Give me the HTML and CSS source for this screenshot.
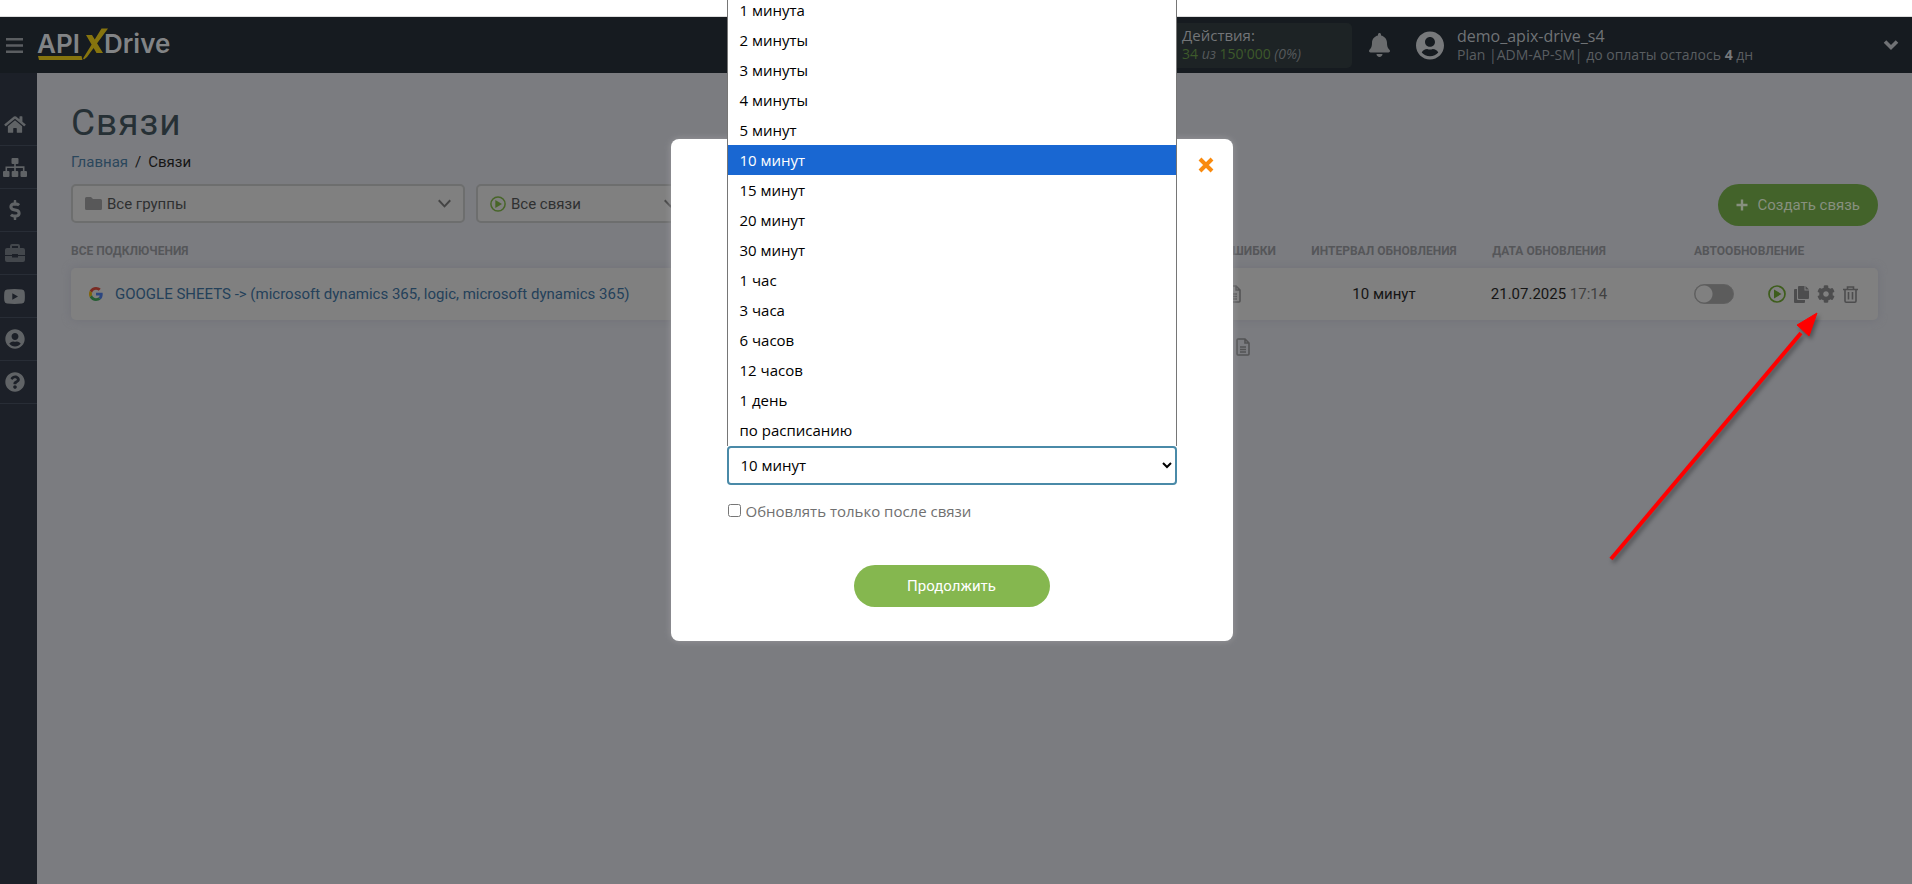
FILE: index.html
```html
<!DOCTYPE html>
<html lang="ru">
<head>
<meta charset="utf-8">
<title>Связи</title>
<link rel="stylesheet" href="styles.css">
</head>
<body>
<svg class="defs" aria-hidden="true">
  <symbol id="i-user" viewBox="0 0 496 512"><path fill-rule="evenodd" d="M248 8C111 8 0 119 0 256s111 248 248 248 248-111 248-248S385 8 248 8zm0 96c48.600 0 88 39.400 88 88s-39.400 88-88 88-88-39.400-88-88 39.400-88 88-88zm0 344c-58.700 0-111.300-26.600-146.500-68.200 18.800-35.400 55.600-59.800 98.500-59.800 2.400 0 4.800.4 7.100 1.100 13 4.200 26.600 6.900 40.900 6.900 14.300 0 28-2.700 40.900-6.900 2.300-.7 4.700-1.100 7.100-1.100 42.900 0 79.700 24.400 98.500 59.800C359.300 421.400 306.700 448 248 448z"/></symbol>
  <symbol id="i-doc" viewBox="0 0 14 18"><path d="M1 2q0-1 1-1h7l4 4v11q0 1-1 1H2q-1 0-1-1zM9 1v4h4M4 9h6M4 11.500h6M4 14h6" fill="none" stroke="currentColor" stroke-width="1.600"/></symbol>
  <symbol id="i-play" viewBox="0 0 18 18"><circle cx="9" cy="9" r="8" fill="none" stroke="currentColor" stroke-width="1.700"/><path d="M6 4.500v9L13.500 9z"/></symbol>
  <symbol id="i-down" viewBox="0 0 12 8"><path d="M.7 1 6 6.600 11.300 1" fill="none" stroke="currentColor" stroke-width="1.800"/></symbol>
</svg>

<div class="page">
  <div class="strip"></div>
  <header class="topbar">
    <button class="icon-btn burger" aria-label="Меню"><svg width="17" height="15" viewBox="0 0 17 15"><path d="M0 0h17v2.600H0zM0 6.200h17v2.600H0zM0 12.400h17V15H0z"/></svg></button>
    <a class="logo" href="#" aria-label="APIXDrive">
      <svg width="138" height="34" viewBox="0 0 138 34">
        <text x="0" y="25">API</text>
        <path class="logo-mark" d="M1 28H44.500L45.500 32H2zM46 30.500 64.500.5H71L50 29 47 31.500zM49 7H55L66 25H59.500z"/>
        <text x="67" y="25">Drive</text>
      </svg>
    </a>
    <div class="actions-box">
      <div class="actions-title">Действия:</div>
      <div class="actions-value"><b>34</b> <i>из</i> <b>150'000</b> <i>(0%)</i></div>
    </div>
    <button class="icon-btn bell" aria-label="Уведомления"><svg width="21" height="24" viewBox="0 0 448 512"><path d="M224 512c35.320 0 63.970-28.650 63.970-64H160.030c0 35.350 28.650 64 63.970 64zm215.390-149.710c-19.320-20.760-55.470-51.990-55.470-154.290 0-77.700-54.480-139.900-127.940-155.160V32c0-17.670-14.320-32-31.980-32s-31.980 14.330-31.980 32v20.840C118.560 68.100 64.080 130.300 64.080 208c0 102.300-36.150 133.530-55.470 154.290-6 6.450-8.660 14.160-8.610 21.710.11 16.400 12.980 32 32.100 32h383.800c19.120 0 32-15.600 32.100-32 .05-7.550-2.610-15.270-8.610-21.710z"/></svg></button>
    <div class="account">
      <svg width="28" height="29"><use href="#i-user"/></svg>
      <div>
        <div class="account-name">demo_apix-drive_s4</div>
        <div class="account-plan">Plan |ADM-AP-SM| до оплаты осталось <strong>4</strong> дн</div>
      </div>
    </div>
    <button class="icon-btn more" aria-label="Аккаунт"><svg width="16" height="12" viewBox="0 0 16 12"><path d="M2 2.500 8 8.500 14 2.500" fill="none" stroke="currentColor" stroke-width="3.600"/></svg></button>
  </header>

  <div class="body">
    <nav class="sidebar" aria-label="Разделы">
      <a href="#" aria-label="Главная"><svg width="22" height="19" viewBox="0 0 576 512"><path d="M280.370 148.260L96 300.110V464a16 16 0 0 0 16 16l112.060-.29a16 16 0 0 0 15.920-16V368a16 16 0 0 1 16-16h64a16 16 0 0 1 16 16v95.640a16 16 0 0 0 16 16.050L464 480a16 16 0 0 0 16-16V300L295.670 148.260a12.190 12.190 0 0 0-15.300 0zM571.600 251.470L488 182.560V44.050a12 12 0 0 0-12-12h-56a12 12 0 0 0-12 12v72.610L318.470 43a48 48 0 0 0-61 0L4.340 251.470a12 12 0 0 0-1.600 16.900l25.500 31A12 12 0 0 0 45.150 301l235.220-193.740a12.190 12.190 0 0 1 15.300 0L530.900 301a12 12 0 0 0 16.900-1.600l25.500-31a12 12 0 0 0-1.700-16.930z"/></svg></a>
      <a href="#" aria-label="Связи"><svg width="24" height="19" viewBox="0 0 24 19"><rect x="8.500" width="7" height="6" rx="1"/><rect y="13" width="6.500" height="6" rx="1"/><rect x="8.700" y="13" width="6.600" height="6" rx="1"/><rect x="17.500" y="13" width="6.500" height="6" rx="1"/><path d="M11.200 5h1.600v3.300h8.700v5h-1.600V9.900h-7.100v3.500h-1.600V9.900H4.100v3.500H2.500v-5h8.700z"/></svg></a>
      <a href="#" aria-label="Оплата"><svg width="12" height="20" viewBox="0 0 288 512"><path d="M209.200 233.400l-108-31.600C88.700 198.200 80 186.500 80 173.500c0-16.300 13.200-29.500 29.500-29.500h66.300c12.200 0 24.200 3.700 34.200 10.500 6.100 4.100 14.300 3.100 19.500-2l34.800-34c7.100-6.900 6.100-18.400-1.800-24.500C238 74.800 207.400 64.100 176 64V16c0-8.800-7.200-16-16-16h-32c-8.800 0-16 7.200-16 16v48h-2.500C45.800 64-5.400 118.700.5 183.600c4.200 46.100 39.400 83.600 83.800 96.600l102.500 30c12.500 3.700 21.200 15.300 21.200 28.300 0 16.300-13.200 29.500-29.500 29.500h-66.300C100 368 88 364.300 78 357.500c-6.100-4.100-14.300-3.100-19.500 2l-34.800 34c-7.100 6.900-6.100 18.400 1.800 24.500 24.500 19.200 55.100 29.900 86.500 30v48c0 8.800 7.200 16 16 16h32c8.800 0 16-7.200 16-16v-48.200c46.600-.9 90.300-28.600 105.700-72.700 21.500-61.600-14.600-124.800-72.500-141.700z"/></svg></a>
      <a class="dim" href="#" aria-label="Портфель"><svg width="20" height="18" viewBox="0 0 20 18"><path fill-rule="evenodd" d="M5 4V2q0-2 2-2h6q2 0 2 2v2h3q2 0 2 2v5h-7v-1H7v1H0V6q0-2 2-2zM7 4h6V2H7zM0 12h7v1.500h6V12h7v4q0 2-2 2H2q-2 0-2-2z"/></svg></a>
      <a href="#" aria-label="Видео"><svg width="21" height="15" viewBox="0 0 21 15"><path fill-rule="evenodd" d="M3 .4Q10.500-.4 18 .4 20.300.6 20.600 3q.6 4.500 0 9-.3 2.400-2.600 2.600-7.500.8-15 0Q.7 14.400.4 12q-.6-4.500 0-9Q.7.600 3 .4zM8.300 4.300v6.400L14 7.500z"/></svg></a>
      <a href="#" aria-label="Профиль"><svg width="20" height="20"><use href="#i-user"/></svg></a>
      <a href="#" aria-label="Помощь"><svg width="20" height="20" viewBox="0 0 512 512"><path d="M504 256c0 136.997-111.043 248-248 248S8 392.997 8 256C8 119.083 119.043 8 256 8s248 111.083 248 248zM262.655 90c-54.497 0-89.255 22.957-116.549 63.758-3.536 5.286-2.353 12.415 2.715 16.258l34.699 26.310c5.205 3.947 12.621 3.008 16.665-2.122 17.864-22.658 30.113-35.797 57.303-35.797 20.429 0 45.698 13.148 45.698 32.958 0 14.976-12.363 22.667-32.534 33.976C247.128 238.528 216 254.941 216 296v4c0 6.627 5.373 12 12 12h56c6.627 0 12-5.373 12-12v-1.333c0-28.462 83.186-29.647 83.186-106.667 0-58.002-60.165-102-116.531-102zM256 338c-25.365 0-46 20.635-46 46 0 25.364 20.635 46 46 46s46-20.636 46-46c0-25.365-20.635-46-46-46z"/></svg></a>
    </nav>

    <main class="content">
      <h1>Связи</h1>
      <div class="crumbs"><a href="#">Главная</a><span>/</span><span>Связи</span></div>
      <div class="toolbar">
        <button class="filter filter-wide"><svg class="folder" width="17" height="13" viewBox="0 0 17 13"><path d="M1.500 0H6l2 2h7.500Q17 2 17 3.500v8q0 1.500-1.500 1.500h-14Q0 13 0 11.500v-10Q0 0 1.500 0z"/></svg><span>Все группы</span><svg class="caret" width="13" height="9"><use href="#i-down"/></svg></button>
        <button class="filter"><svg class="play" width="16" height="16"><use href="#i-play"/></svg><span>Все связи</span><svg class="caret" width="13" height="9"><use href="#i-down"/></svg></button>
        <button class="create"><svg width="12" height="12" viewBox="0 0 12 12"><path d="M6 .5v11M.5 6h11" stroke="currentColor" stroke-width="2.400"/></svg>Создать связь</button>
      </div>

      <table class="links">
        <colgroup><col><col class="c-err"><col class="c-int"><col class="c-date"><col class="c-auto"><col class="c-act"></colgroup>
        <thead><tr><th class="left">Все подключения</th><th class="err">Ошибки</th><th>Интервал обновления</th><th>Дата обновления</th><th class="auto" colspan="2">Автообновление</th></tr></thead>
        <tbody>
          <tr class="card">
            <td class="name"><div class="name-in">
              <svg width="14" height="14" viewBox="0 0 48 48"><path fill="#7a2a22" d="M24 9.500c3.540 0 6.710 1.220 9.210 3.600l6.850-6.850C35.900 2.380 30.470 0 24 0 14.620 0 6.510 5.380 2.560 13.220l7.980 6.190C12.430 13.720 17.740 9.500 24 9.500z"/><path fill="#2c4680" d="M46.980 24.550c0-1.570-.15-3.090-.38-4.550H24v9.020h12.940c-.58 2.960-2.260 5.480-4.780 7.180l7.730 6c4.510-4.180 7.090-10.360 7.090-17.650z"/><path fill="#80640a" d="M10.530 28.590c-.48-1.450-.76-2.990-.76-4.590s.27-3.140.76-4.590l-7.980-6.190C.92 16.460 0 20.120 0 24c0 3.880.92 7.540 2.560 10.780l7.970-6.190z"/><path fill="#255d33" d="M24 48c6.480 0 11.930-2.130 15.890-5.810l-7.730-6c-2.150 1.450-4.920 2.300-8.160 2.300-6.260 0-11.570-4.220-13.470-9.910l-7.980 6.190C6.510 42.620 14.620 48 24 48z"/></svg>
              <a href="#">GOOGLE SHEETS -&gt; (microsoft dynamics 365, logic, microsoft dynamics 365)</a></div></td>
            <td class="doc"><svg width="14" height="18"><use href="#i-doc"/></svg></td>
            <td>10 минут</td>
            <td>21.07.2025 <span class="time">17:14</span></td>
            <td class="auto"><input class="toggle" type="checkbox" role="switch" aria-label="Автообновление"></td>
            <td><div class="tools">
              <button class="icon-btn play" aria-label="Запустить"><svg width="18" height="18"><use href="#i-play"/></svg></button>
              <button class="icon-btn" aria-label="Копировать"><svg width="15" height="17" viewBox="0 0 15 17"><path d="M5 0h5.500v4.500H15V12q0 1-1 1H5q-1 0-1-1V1q0-1 1-1zM11.500 0 15 3.500h-3.500zM0 4q0-1 1-1h2v10q0 1 1 1h7v2q0 1-1 1H1q-1 0-1-1z"/></svg></button>
              <button class="icon-btn" aria-label="Настройки"><svg width="18" height="18" viewBox="0 0 512 512"><path d="M487.400 315.700l-42.600-24.600c4.300-23.200 4.300-47 0-70.200l42.600-24.600c4.900-2.800 7.100-8.600 5.500-14-11.100-35.600-30-67.800-54.700-94.600-3.800-4.100-10-5.100-14.800-2.300L380.800 110c-17.900-15.400-38.500-27.300-60.800-35.100V25.800c0-5.600-3.900-10.500-9.400-11.700-36.700-8.200-74.300-7.800-109.200 0-5.500 1.200-9.400 6.100-9.400 11.700V75c-22.200 7.900-42.800 19.800-60.800 35.100L88.700 85.500c-4.900-2.800-11-1.900-14.800 2.300-24.700 26.700-43.600 58.900-54.700 94.600-1.700 5.400.6 11.200 5.500 14L67.300 221c-4.300 23.200-4.300 47 0 70.200l-42.600 24.600c-4.900 2.800-7.100 8.600-5.500 14 11.100 35.600 30 67.800 54.700 94.600 3.800 4.100 10 5.100 14.800 2.300l42.600-24.600c17.900 15.400 38.500 27.300 60.800 35.100v49.200c0 5.600 3.900 10.500 9.400 11.700 36.700 8.200 74.300 7.800 109.200 0 5.500-1.200 9.400-6.100 9.400-11.700v-49.200c22.200-7.900 42.800-19.800 60.800-35.100l42.600 24.600c4.900 2.800 11 1.900 14.800-2.300 24.700-26.700 43.600-58.900 54.700-94.600 1.500-5.500-.7-11.300-5.600-14.100zM256 336c-44.100 0-80-35.900-80-80s35.900-80 80-80 80 35.900 80 80-35.900 80-80 80z"/></svg></button>
              <button class="icon-btn" aria-label="Удалить"><svg width="15" height="17" viewBox="0 0 15 17"><path d="M0 3.500h15M4.500 3V1h6v2M2 3.500V15q0 1.200 1.200 1.200h8.600Q13 16.200 13 15V3.500M5.500 6v7.500M9.500 6v7.500" fill="none" stroke="currentColor" stroke-width="1.600"/></svg></button>
            </div></td>
          </tr>
          <tr class="total"><td></td><td class="doc"><svg width="14" height="18"><use href="#i-doc"/></svg></td><td></td><td></td><td></td><td></td></tr>
        </tbody>
      </table>
    </main>
  </div>
</div>

<div class="overlay">
  <form class="modal" role="dialog" aria-label="Интервал обновления">
    <button class="icon-btn close" type="button" aria-label="Закрыть"><svg width="16" height="16" viewBox="0 0 16 16"><path d="M2 2 14 14M14 2 2 14" stroke="currentColor" stroke-width="4"/></svg></button>
    <div class="field">
      <select aria-label="Интервал обновления"><option>10 минут</option></select>
      <ul class="options" role="listbox">
        <li role="option">1 минута</li><li role="option">2 минуты</li><li role="option">3 минуты</li><li role="option">4 минуты</li><li role="option">5 минут</li><li role="option" class="selected" aria-selected="true">10 минут</li><li role="option">15 минут</li><li role="option">20 минут</li><li role="option">30 минут</li><li role="option">1 час</li><li role="option">3 часа</li><li role="option">6 часов</li><li role="option">12 часов</li><li role="option">1 день</li><li role="option">по расписанию</li>
      </ul>
    </div>
    <label class="check"><input type="checkbox"><span>Обновлять только после связи</span></label>
    <button class="submit" type="button">Продолжить</button>
  </form>
</div>

<svg class="arrow" width="220" height="260" viewBox="0 0 220 260" aria-hidden="true"><path d="M11 250 201 24" stroke="#f00" stroke-width="4"/><path fill="#f00" d="M217 4 197 16 209 27z" stroke="#f00"/></svg>
</body>
</html>
```

FILE: styles.css
```css
* { box-sizing: border-box; }
body { margin: 0; overflow: hidden; font-family: Roboto, "Liberation Sans", sans-serif; font-size: 15px; line-height: 20px; color: #151515; background: #7b7c80; }
svg { display: block; flex: none; fill: currentColor; }
.defs { position: absolute; width: 0; height: 0; }
a { text-decoration: none; color: #24415a; }
button { font: inherit; border: 0; cursor: pointer; }
.icon-btn { padding: 0; background: none; color: inherit; display: block; }

.page { min-height: 100vh; display: flex; flex-direction: column; }
.strip { height: 17px; background: #fff; border-bottom: 1px solid #ddd; }

.topbar { height: 56px; background: #161b20; color: #737578; display: flex; align-items: center; padding: 0 13px 0 6px; font-family: "Open Sans", "Noto Sans", sans-serif; }
.burger { margin-right: 14px; color: #5b5e61; }
.logo text { font: 600 26px Inter, sans-serif; fill: #828486; }
.logo-mark { fill: #86740e; }
.actions-box { margin-left: auto; width: 190px; height: 45px; border-radius: 5px; background: #1d2325; padding: 3px 0 0 20px; }
.actions-title { font-size: 15px; line-height: 19px; }
.actions-value { font-size: 14px; line-height: 18px; }
.actions-value b { font-weight: 400; color: #3d5a2b; }
.actions-value i { color: #55595b; }
.bell { margin: 0 26px 0 17px; color: #6a6c6e; }
.account { display: flex; align-items: center; gap: 13px; color: #77797b; width: 440px; }
.account-name { font-size: 16px; line-height: 19px; color: #707376; }
.account-plan { font-size: 14px; line-height: 17px; color: #5a5e61; }
.account-plan strong { color: #77797b; }
.more { margin-left: 27px; color: #707275; }

.body { flex: 1; display: flex; }
.sidebar { width: 37px; background: #1c2028; padding-top: 30px; display: flex; flex-direction: column; }
.sidebar a { height: 43px; display: flex; align-items: center; justify-content: center; padding-right: 8px; border-bottom: 1px solid #282d36; color: #606366; }
.sidebar .dim { color: #43474c; }

.content { flex: 1; padding: 26px 34px 0; }
h1 { margin: 0; font-weight: 400; font-size: 37px; line-height: 48px; letter-spacing: 1px; color: #263035; }
.crumbs { display: flex; gap: 7px; margin-top: 5px; }
.crumbs a { color: #2b475c; }
.toolbar { display: flex; align-items: flex-start; gap: 11px; height: 42px; margin-top: 12px; }
.filter { width: 215px; height: 39px; display: flex; align-items: center; gap: 5px; padding: 0 12px; border: 2px solid #6d6e6e; border-radius: 5px; background: #808080; color: #2f3031; }
.filter-wide { width: 394px; }
.folder { color: #585859; }
.caret { margin-left: auto; color: #444; }
.play { color: #476528; }
.create { margin-left: auto; height: 42px; border-radius: 21px; background: #43632a; color: #87907f; padding: 0 18px; display: flex; align-items: center; gap: 9px; }

.links { width: 100%; margin-top: 10px; table-layout: fixed; border-spacing: 0; }
.c-err { width: 82px; }
.c-int { width: 186px; }
.c-date { width: 144px; }
.c-auto { width: 120px; }
.c-act { width: 137px; }
th { height: 32px; padding: 0 0 2px; font-size: 12px; line-height: 16px; font-weight: 700; text-transform: uppercase; white-space: nowrap; color: #555659; }
th.left { text-align: left; }
th.auto { text-align: left; padding-left: 73px; }
td { padding: 0; text-align: center; white-space: nowrap; }
.card td { height: 52px; background: #808080; }
.card { box-shadow: 0 0 8px #717278; border-radius: 5px; }
.card td:first-child { border-radius: 5px 0 0 5px; }
.card td:last-child { border-radius: 0 5px 5px 0; }
.name-in { display: flex; align-items: center; gap: 12px; padding-left: 18px; }
.doc { color: #535354; }
.doc svg { margin-left: 18px; }
.total td { height: 54px; }
.total .doc svg { margin-left: 27px; }
.time { color: #414141; }
td.auto { text-align: left; padding-left: 73px; }
.toggle { appearance: none; display: block; margin: 0; width: 40px; height: 20px; border-radius: 10px; border: 1px solid #606060; background: radial-gradient(circle at 9px 9px, #808080 8px, #5c5c5c 9px); }
.tools { display: flex; align-items: center; justify-content: flex-end; gap: 8px; padding-right: 20px; color: #4d4d4e; }
.tools .play { color: #3e5d1c; }

.overlay { position: absolute; inset: 0; display: flex; justify-content: center; align-items: flex-start; padding: 139px 9px 0 0; }
.modal { width: 562px; padding: 18px 56px 34px 56px; border-radius: 8px; background: #fff; box-shadow: 0 0 7px #99999c; display: flex; flex-direction: column; font-family: "Open Sans", "Noto Sans", sans-serif; }
.close { align-self: flex-end; color: #f98a0e; margin: 0 -37px 273px 0; }
.field { position: relative; }
.field select { display: block; width: 100%; height: 39px; padding: 0 8px 1px; border: 2px solid #4a8aa8; border-radius: 4px; background: #fff; font: 15px "Open Sans", "Noto Sans", sans-serif; color: #000; }
.options { position: absolute; left: 0; right: 0; bottom: 100%; margin: 0; padding: 0 0 1px; list-style: none; background: #fff; border: 1px solid #767676; border-bottom: 0; color: #000; }
.options li { height: 30px; line-height: 30px; padding-left: 12px; }
.options .selected { background: #1967d2; color: #fff; }
.check { display: flex; align-items: center; gap: 5px; margin-top: 15px; line-height: 22px; color: #707070; }
.check input { width: 13px; height: 13px; margin: 0 0 2px 1px; }
.submit { align-self: center; width: 196px; height: 42px; margin-top: 43px; border-radius: 21px; background: #85b74f; color: #fff; font-family: Roboto, sans-serif; }

.arrow { position: absolute; left: 1600px; top: 309px; filter: drop-shadow(2px 3px 2px rgba(0, 0, 0, .35)); }
```
